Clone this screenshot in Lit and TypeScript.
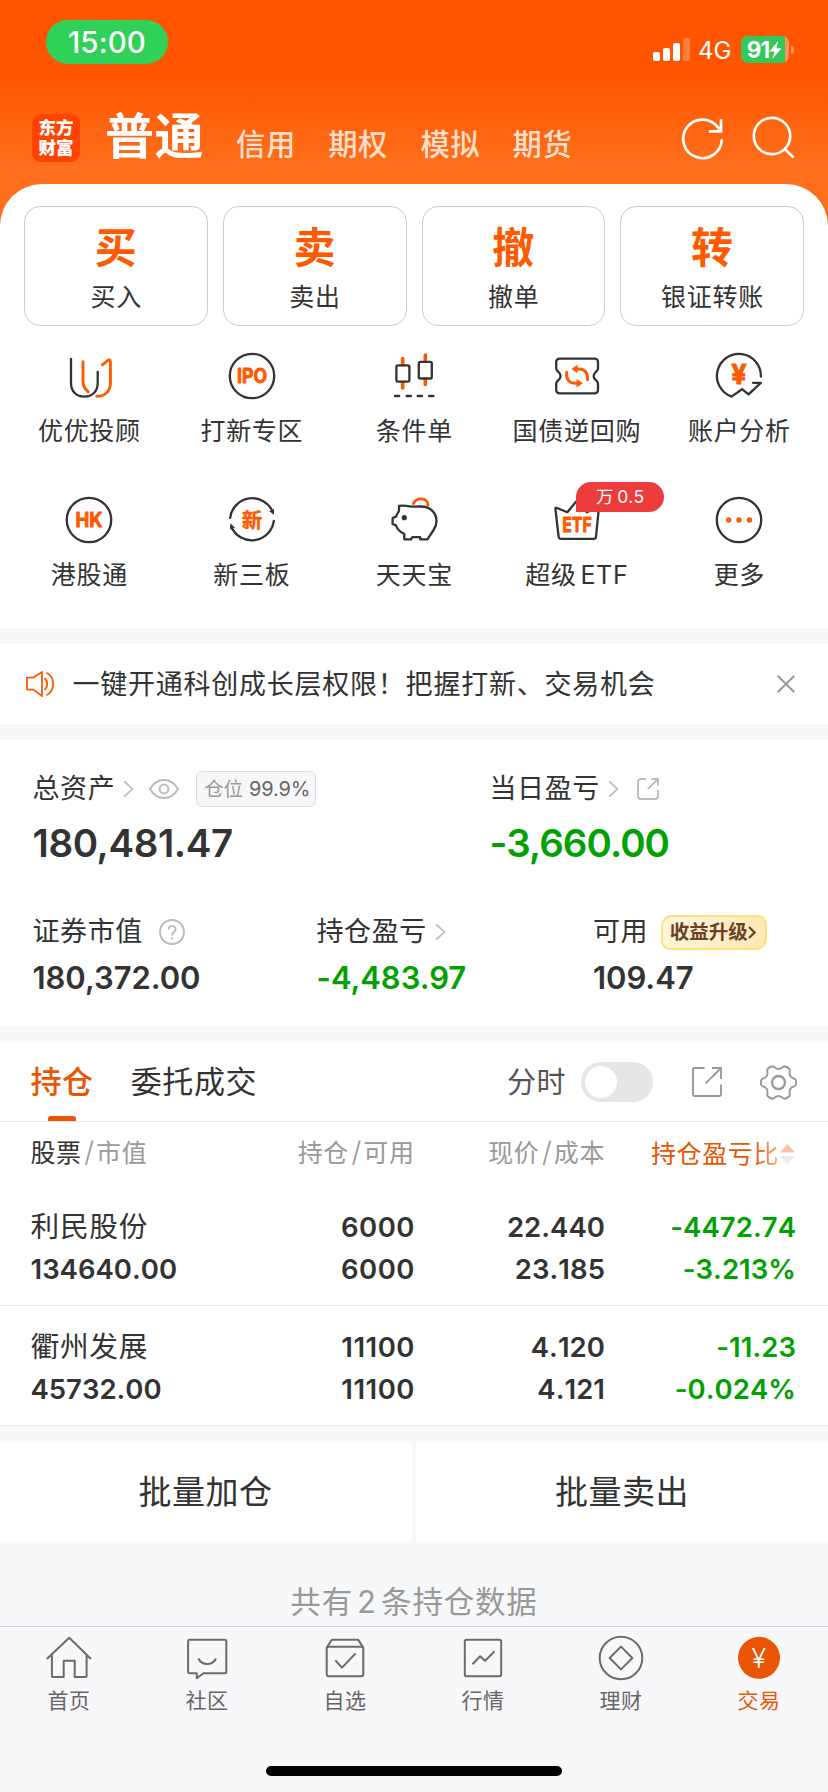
import { LitElement, html, svg, css, nothing } from "lit";
import { customElement } from "lit/decorators.js";
import { classMap } from "lit/directives/class-map.js";

const gearPath = (() => {
  const pt = (deg: number, r: number) => {
    const a = (deg * Math.PI) / 180;
    return `${(18.5 + r * Math.cos(a)).toFixed(2)} ${(18.5 + r * Math.sin(a)).toFixed(2)}`;
  };
  let d = `M${pt(-9, 17.4)}`;
  for (let k = 0; k < 6; k++) {
    const t = k * 60;
    d += ` Q${pt(t, 18)} ${pt(t + 9, 17.4)} Q${pt(t + 13, 16.8)} ${pt(t + 16, 15.4)} Q${pt(t + 30, 12)} ${pt(t + 44, 15.4)} Q${pt(t + 47, 16.8)} ${pt(t + 51, 17.4)}`;
  }
  return d + "Z";
})();

const icons: Record<string, unknown> = {
  uu: svg`<path class="d" d="M6 7V31.2C6 39.5 11.5 44.6 19.3 44.6S32.7 39.5 32.7 31.2V19.8"/>
    <path class="o" d="M18 9.7V29.5C18 34 20 37 23.2 39.8"/>
    <path class="o" d="M37.4 12.9 42.6 8.5Q45.4 7 45.4 10V31C45.4 39 40 44.4 31.8 44.4"/>`,
  ipo: svg`<circle class="d" cx="24" cy="24" r="22.2"/>
    <text class="t" x="24" y="31.2" font-size="20" textLength="30" lengthAdjust="spacingAndGlyphs">IPO</text>`,
  cond: svg`<path class="o w" d="M12.7 6.5V13M12.7 31V36M35.3 3V9M35.3 27V32.5"/>
    <rect class="d" x="6.4" y="13.3" width="13" height="16.4" rx="1.6"/>
    <rect class="d" x="28.8" y="9.9" width="13" height="16.6" rx="1.6"/>
    <path class="d" d="M5 44H9.2M16.6 44H21M27.6 44H32M39 44H43.4"/>`,
  bond: svg`<path class="d" d="M6.4 6.7H41.8A3.2 3.2 0 0 1 45 9.9V16.6C45 19.6 40.6 19.8 40.6 24S45 28.4 45 31.4V38.1A3.2 3.2 0 0 1 41.8 41.3H6.4A3.2 3.2 0 0 1 3.2 38.1V31.4C3.2 28.4 7.6 28.2 7.6 24S3.2 19.6 3.2 16.6V9.9A3.2 3.2 0 0 1 6.4 6.7Z"/>
    <path class="o" d="M23 17H26.5C32 17 35.2 21.5 34.5 27.8M13.7 20.2C12.8 27 16 31.2 21.5 31.2H25.5"/>
    <path class="of" d="M18.3 17 24.6 12.8V21.2ZM29.8 31.2 23.5 27V35.4Z"/>`,
  acct: svg`<path class="d" d="M45.9 24.6A22 22 0 1 0 16.5 44.6L27 37.2 33.6 42.4 45.8 30.8H38"/>
    <text class="t" x="24" y="32" font-size="27">¥</text>`,
  hk: svg`<circle class="d" cx="24" cy="24" r="22.2"/>
    <text class="t" x="24" y="31.2" font-size="20" textLength="27" lengthAdjust="spacingAndGlyphs">HK</text>`,
  xin: svg`<path class="d" d="M2.2 21.8A22.2 22.2 0 0 1 44.8 16M45.8 24.8A22.2 22.2 0 0 1 3.2 30.5"/>
    <path class="df" d="M41.2 15.2 45.9 13 46.1 18.8Z"/><path class="df" d="M6.9 31.8 2.1 33.4 2.3 27.2Z"/>
    <text class="t cjk" x="24" y="31.6" font-size="20.5">新</text>`,
  pig: svg`<path class="d" d="M24 10.7C20 11 18 9 9 9.8V14.6C8.5 16.5 6.6 18.5 6 20.6L2.6 22V28L5.9 29.4C7.5 33.5 10.5 36.4 14.3 38V43.3H21L22.4 41.2H30.2V43.3H37.4L43.6 34C46.8 29 47.4 23 44.6 17.6 41.5 12.6 36 10.3 30 10.5Z"/>
    <circle class="df" cx="14.3" cy="21.7" r="2.6"/>
    <path class="o" d="M23.4 7.6C26 1.4 37.8 0.6 38 9.4"/>`,
  etf: svg`<path class="d" d="M2.4 12.6Q2.4 11.2 4 12L14.3 16.2 23.2 5.6Q24 4.8 24.8 5.6L33.7 16.2 44 12Q46 11.2 45.8 12.8L43 40.6Q42.8 42.9 40.4 42.9H8.2Q6 42.9 5.6 40.6Z"/>
    <text class="t" x="24" y="35.6" font-size="20" textLength="29.5" lengthAdjust="spacingAndGlyphs">ETF</text>`,
  more: svg`<circle class="d" cx="24" cy="24" r="22.2"/>
    <circle class="of" cx="13.6" cy="24" r="2.7"/><circle class="of" cx="24" cy="24" r="2.7"/><circle class="of" cx="34.4" cy="24" r="2.7"/>`,
  home: svg`<path class="g" d="M1.8 25 24.2 3.8 46 25M6.9 20.6V41.4Q6.9 43.1 8.6 43.1H18.7V26.8H29.7V43.1H40Q41.6 43.1 41.6 41.4V20.6"/>`,
  chat: svg`<path class="g" d="M6.6 5.7H41.8Q43.3 5.7 43.3 7.2V37.8Q43.3 39.3 41.8 39.3H20.4L13.8 44.2V39.3H6.6Q5.1 39.3 5.1 37.8V7.2Q5.1 5.7 6.6 5.7Z"/><path class="g" d="M15.4 24.5C19 31.8 29.2 31.8 33 24.5"/>`,
  pick: svg`<rect class="g" x="5.7" y="12.8" width="36.6" height="29.4" rx="2"/><path class="g" d="M5.9 13.4 10.2 6.6Q10.7 5.8 11.6 5.8H36.4Q37.3 5.8 37.8 6.6L42.1 13.4M14.4 26.4 21 33.6 34.6 19.4"/>`,
  quote: svg`<rect class="g" x="5.8" y="5.8" width="36.4" height="36.4" rx="1.8"/><path class="g" d="M13.4 30.3 21.2 22.2 26 26.8 35.6 17.4"/>`,
  wealth: svg`<circle class="g" cx="24" cy="24" r="21.3"/><path class="g" d="M24 12.6 35.4 24 24 35.4 12.6 24Z"/>`,
  trade: svg`<circle class="tf" cx="24" cy="23.8" r="21"/><text class="yen" x="24" y="33.6" font-size="27">¥</text>`,
};

@customElement("app-root")
export class AppRoot extends LitElement {
  static styles = css`
    :host {
      display: flex; flex-direction: column; width: 828px; height: 1792px; overflow: hidden;
      background: #f7f8fa; color: #333; font-family: Inter, "Noto Sans CJK SC", sans-serif;
      -webkit-font-smoothing: antialiased;
    }
    * { box-sizing: border-box; }
    svg { display: block; flex: none; overflow: visible; }
    .head { height: 246px; flex: none; background: linear-gradient(#ff5500 75px, #ff6f1b 165px); display: flex; flex-direction: column; }
    .status { height: 84px; padding: 20px 34px 0 46px; display: flex; align-items: flex-start; color: #fff; }
    .time { width: 122px; height: 44px; border-radius: 22px; background: #30d158; font-size: 29.5px; line-height: 45px; text-align: center; font-weight: 500; letter-spacing: 0.1px; }
    .sig { margin: 18px 0 0 485px; }
    .net { font-size: 24px; line-height: 24px; margin: 19px 0 0 8px; width: 43px; }
    .batt { display: flex; align-items: center; justify-content: center; width: 48px; height: 27px; margin-top: 16px; border-radius: 7px; background: linear-gradient(90deg, #34c759 44px, #ff925c 44px); font-size: 22.5px; font-weight: 700; padding-right: 4px; letter-spacing: -0.8px; padding-left: 3px; }
    .nub { width: 3px; height: 8px; margin: 26px 0 0 2px; border-radius: 0 4px 4px 0; background: #ff925c; }
    .nav { height: 100px; padding: 0 31px 0 32px; display: flex; align-items: flex-start; color: #fff; }
    .logo { width: 48px; height: 48px; margin-top: 30px; border-radius: 9px; background: #ff4400; font-size: 17.5px; line-height: 20px; font-weight: 900; padding-top: 4px; text-align: center; }
    .mode { font-size: 49px; line-height: 56px; font-weight: 700; margin: 25px 0 0 25px; width: 131px; white-space: nowrap; letter-spacing: 0.5px; }
    .alt { font-size: 29.3px; line-height: 34px; margin-top: 44.4px; width: 92.2px; letter-spacing: 0.6px; font-weight: 500; color: rgba(255,255,255,.8); }
    .ring { margin: 34px 0 0 77.7px; }
    .find { margin: 33px 0 0 28px; }
    .panel { height: 444px; margin-top: -62px; flex: none; background: #fff; border-radius: 42px 42px 0 0; padding-top: 22px; }
    .cards { display: grid; grid-template-columns: repeat(4, 1fr); gap: 15px; padding: 0 24px; }
    .card { height: 120px; border: 1px solid #ccc; border-radius: 16px; display: flex; flex-direction: column; align-items: center; }
    .big { font-size: 42px; line-height: 46px; font-weight: 700; color: #ff5a00; margin-top: 18px; }
    .lab { font-size: 25px; line-height: 30px; letter-spacing: 0.7px; margin-right: -0.7px; white-space: nowrap; word-spacing: -4px; }
    .card .lab { margin-top: 11px; }
    .grid { display: grid; grid-template-columns: repeat(5, 162.5px); grid-auto-rows: 144px; padding: 26px 7.75px 0; }
    .cell { display: flex; flex-direction: column; align-items: center; position: relative; }
    .cell .lab { margin-top: 16px; }
    .tip { position: absolute; left: 81px; top: -14px; width: 88px; height: 30px; border-radius: 15px 15px 15px 0; background: #ed3c3c; color: #fff; font-size: 17.5px; line-height: 30px; text-align: center; letter-spacing: 0.4px; word-spacing: -2px; }
    .d { fill: none; stroke: #333; stroke-width: 2.3; stroke-linecap: round; stroke-linejoin: round; }
    .df { fill: #333; }
    .o { fill: none; stroke: #ff5a00; stroke-width: 2.9; stroke-linecap: round; stroke-linejoin: round; }
    .o.w { stroke-width: 3.6; }
    .of { fill: #ff5a00; }
    .t { fill: #ff5a00; stroke: #ff5a00; stroke-width: 0.9; stroke-linejoin: round; font-family: Inter, sans-serif; font-weight: 700; text-anchor: middle; }
    .t.cjk { font-family: "Noto Sans CJK SC", sans-serif; font-weight: 700; stroke-width: 0.4; }
    .g { fill: none; stroke: #6b6b6b; stroke-width: 2; stroke-linejoin: round; }
    .tf { fill: #ea5504; }
    .yen { fill: #fff; text-anchor: middle; font-family: Inter, sans-serif; font-weight: 300; }
    .notice { height: 80px; margin-top: 16px; flex: none; background: #fff; display: flex; align-items: center; padding: 0 33px 0 26px; }
    .notice .msg { font-size: 27px; letter-spacing: 0.76px; line-height: 34px; padding-top: 2px; margin-left: 17.5px; flex: 1; white-space: nowrap; }
    .assets { height: 286px; margin-top: 16px; flex: none; background: #fff; padding: 31px 0 0 32.5px; }
    .r1 { display: grid; grid-template-columns: 457px 1fr; }
    .r2 { display: grid; grid-template-columns: 284px 276.5px 1fr; margin-top: 49px; }
    .cap { display: flex; align-items: center; height: 36px; line-height: 34px; font-size: 27px; letter-spacing: 0.6px; white-space: nowrap; }
    .chev { margin-left: 8px; }
    .eye { margin-left: 15px; }
    .out { margin-left: 18px; }
    .rate { margin-left: 17px; width: 120px; height: 36px; border: 1px solid #dedfe3; border-radius: 6px; background: #f7f7fa; display: flex; align-items: center; padding-left: 7px; font-size: 19.5px; color: #999; letter-spacing: -0.2px; }
    .rate .n { color: #666; margin-left: 6px; font-size: 20px; letter-spacing: -0.1px; }
    .sum { font-size: 38.5px; line-height: 44px; font-weight: 600; margin-top: 14px; letter-spacing: -0.4px; }
    .sum.down { letter-spacing: -0.95px; }
    .val { font-size: 31px; line-height: 36px; font-weight: 600; margin-top: 9.5px; letter-spacing: -0.05px; }
    .down { color: #00a100; }
    .help { margin-left: 16px; }
    .up { margin-left: 12.5px; width: 106px; height: 35px; border: 2px solid #ffe27d; border-radius: 11px 9px 11px 9px; background: linear-gradient(100deg, #fff6dc, #ffe8b5); color: #6b4226; font-weight: 700; font-size: 19.5px; letter-spacing: 0; display: flex; align-items: center; padding-left: 7px; }
    .tabs { height: 80px; margin-top: 16px; flex: none; background: #fff; border-bottom: 1px solid #e9eaec; display: flex; padding: 0 31px 0 30.5px; }
    .tab { display: flex; flex-direction: column; align-items: center; font-size: 31px; line-height: 40px; padding-top: 20px; letter-spacing: 0.6px; white-space: nowrap; }
    .tab.on { color: #ea5504; font-weight: 500; margin-right: 37px; }
    .tab.on::after { content: ""; width: 28px; height: 5px; margin-top: 14px; border-radius: 3px 3px 0 0; background: #ea5504; }
    .time2 { font-size: 29px; line-height: 40px; margin: 21px 0 0 auto; color: #555; letter-spacing: 0.5px; }
    .switch { width: 72px; height: 40px; margin: 20px 0 0 15px; border-radius: 20px; background: #e5e6e8; padding: 4px; }
    .knob { width: 32px; height: 32px; border-radius: 50%; background: #fff; }
    .exp { margin: 25px 0 0 39px; }
    .gear { margin: 21.5px 0 0 38px; }
    .row { display: grid; grid-template-columns: 200px 184px 190.5px 191px; padding-left: 30.5px; background: #fff; flex: none; justify-items: end; white-space: nowrap; }
    .row > :first-child { justify-self: start; }
    .th { height: 64px; line-height: 63px; font-size: 25px; color: #999; letter-spacing: 0.6px; }
    .th i { font-style: normal; margin: 0 1.5px 0 2.5px; font-size: 28px; line-height: 1; font-weight: 300; }
    .th b { font-weight: 400; color: #333; }
    .sort { display: flex; align-items: center; color: #ea5504; }
    .sort .fade { background: linear-gradient(90deg, #ea5504, #f7b28c); -webkit-background-clip: text; color: transparent; }
    .stock { height: 120px; border-bottom: 1px solid #e9eaec; padding-top: 19.5px; font-size: 27.5px; font-weight: 600; letter-spacing: 0; line-height: 42.7px; font-kerning: none; }
    .stock .name { font-size: 28.7px; font-weight: 400; letter-spacing: 0.7px; }
    .stock .r { text-align: right; letter-spacing: 0.05px; }
    .stock .q { letter-spacing: 0.5px; margin-right: -0.5px; }
    .bulk { display: grid; grid-template-columns: 1fr 1fr; gap: 4px; margin-top: 16px; flex: none; }
    .bulk div { height: 100px; line-height: 101px; background: #fff; text-align: center; font-size: 33px; letter-spacing: 0.5px; }
    .bulk div:first-child { padding-right: 1px; }
    .count { height: 84px; flex: none; padding-top: 39px; line-height: 42px; text-align: center; font-size: 30.5px; letter-spacing: 0.8px; word-spacing: -5px; color: #999; }
    .bar { flex: 1; background: #f8f8fa; border-top: 1px solid #cfd4dc; display: flex; flex-direction: column; align-items: center; }
    .items { display: grid; grid-template-columns: repeat(6, 138px); height: 139px; padding-top: 7px; }
    .item { display: flex; flex-direction: column; align-items: center; font-size: 21px; line-height: 28px; color: #666; letter-spacing: 0.6px; gap: 5px; }
    .item.on { color: #ea5504; }
    .homebar { width: 296px; height: 10px; border-radius: 5px; background: #000; }
  `;

  private chev() {
    return html`<svg class="chev" width="11" height="18" viewBox="0 0 11 18"><path d="M1.2 1.4 9.4 9 1.2 16.6" fill="none" stroke="#bbb" stroke-width="1.7"/></svg>`;
  }
  private glyph(name: string) {
    return html`<svg width="48" height="48" viewBox="0 0 48 48">${icons[name]}</svg>`;
  }
  private cards = [["买", "买入"], ["卖", "卖出"], ["撤", "撤单"], ["转", "银证转账"]];
  private tools = [
    ["uu", "优优投顾"], ["ipo", "打新专区"], ["cond", "条件单"], ["bond", "国债逆回购"], ["acct", "账户分析"],
    ["hk", "港股通"], ["xin", "新三板"], ["pig", "天天宝"], ["etf", "超级 ETF", "万 0.5"], ["more", "更多"],
  ];
  private stocks = [
    ["利民股份", "134640.00", "6000", "6000", "22.440", "23.185", "-4472.74", "-3.213%"],
    ["衢州发展", "45732.00", "11100", "11100", "4.120", "4.121", "-11.23", "-0.024%"],
  ];
  private nav = [["home", "首页"], ["chat", "社区"], ["pick", "自选"], ["quote", "行情"], ["wealth", "理财"], ["trade", "交易"]];

  render() {
    return html`
      <header class="head">
        <div class="status">
          <div class="time">15:00</div>
          <svg class="sig" width="37" height="23" viewBox="0 0 37 23" fill="#fff"><rect y="14" width="7" height="9" rx="2"/><rect x="10" y="10" width="7" height="13" rx="2"/><rect x="20" y="5" width="7" height="18" rx="2"/><rect x="30" width="7" height="23" rx="2" opacity=".25"/></svg>
          <div class="net">4G</div>
          <div class="batt">91<svg width="13" height="18" viewBox="0 0 13 18"><path d="M9.2 0 0.3 10.4H5.4L3.4 18 12.6 7.2H7.4Z" fill="#fff"/></svg></div>
          <div class="nub"></div>
        </div>
        <div class="nav">
          <div class="logo">东方<br />财富</div>
          <div class="mode">普通</div>
          ${["信用", "期权", "模拟", "期货"].map((m) => html`<div class="alt">${m}</div>`)}
          <svg class="ring" width="42" height="42" viewBox="0 0 42 42" fill="none" stroke="#fff" stroke-width="2.7"><path d="M39.8 21.2A19.3 19.3 0 1 1 36.2 9.6L38.4 13.3M39 1.2V13.4H26.8"/></svg>
          <svg class="find" width="43" height="43" viewBox="0 0 43 43" fill="none" stroke="#fff" stroke-width="2.7"><circle cx="20" cy="19" r="18.2"/><path d="M32.8 32 41.6 40.6"/></svg>
        </div>
      </header>
      <section class="panel">
        <div class="cards">${this.cards.map(([c, l]) => html`<div class="card"><div class="big">${c}</div><div class="lab">${l}</div></div>`)}</div>
        <div class="grid">${this.tools.map(([i, l, tip]) => html`<div class="cell">${this.glyph(i)}<div class="lab">${l}</div>${tip ? html`<div class="tip">${tip}</div>` : nothing}</div>`)}</div>
      </section>
      <section class="notice">
        <svg width="29" height="26" viewBox="0 0 29 26" fill="none" stroke="#ff5a00" stroke-width="1.8" stroke-linejoin="round"><path d="M1 6.6H7.4L16 1V25L7.4 18.6H1ZM18.6 7.2C22 10 22 16 18.6 18.8M20.4 1.8C29.4 6 29.4 20 20.4 24.2"/></svg>
        <div class="msg">一键开通科创成长层权限！把握打新、交易机会</div>
        <svg width="18" height="18" viewBox="0 0 18 18"><path d="M.7.7 17.3 17.3M17.3.7.7 17.3" stroke="#999" stroke-width="2"/></svg>
      </section>
      <section class="assets">
        <div class="r1">
          <div>
            <div class="cap">总资产${this.chev()}
              <svg class="eye" width="30" height="20" viewBox="0 0 30 20" fill="none" stroke="#bbb" stroke-width="2"><path d="M1 10C8-2 22-2 29 10 22 22 8 22 1 10Z"/><circle cx="15" cy="10" r="4.4"/></svg>
              <div class="rate">仓位<span class="n">99.9%</span></div></div>
            <div class="sum">180,481.47</div>
          </div>
          <div>
            <div class="cap">当日盈亏${this.chev()}
              <svg class="out" width="22" height="22" viewBox="0 0 22 22" fill="none" stroke="#bbb" stroke-width="1.9"><path d="M9 1H4Q1 1 1 4V18Q1 21 4 21H18Q21 21 21 18V12M14.4 1H21V7.6M21 1 10.8 11.2"/></svg></div>
            <div class="sum down">-3,660.00</div>
          </div>
        </div>
        <div class="r2">
          <div>
            <div class="cap">证券市值
              <svg class="help" width="26" height="26" viewBox="0 0 26 26" fill="none" stroke="#bbb" stroke-width="1.9"><circle cx="13" cy="13" r="12"/><path d="M9.6 10.4C9.6 5.8 16.6 5.8 16.6 10.2 16.6 13 13 13 13 16.4M13 18.2V20.2"/></svg></div>
            <div class="val">180,372.00</div>
          </div>
          <div><div class="cap">持仓盈亏${this.chev()}</div><div class="val down">-4,483.97</div></div>
          <div>
            <div class="cap">可用<div class="up">收益升级<svg width="8" height="13" viewBox="0 0 8 13"><path d="M1 1 6.6 6.5 1 12" fill="none" stroke="#6b4226" stroke-width="2.4"/></svg></div></div>
            <div class="val">109.47</div>
          </div>
        </div>
      </section>
      <section class="tabs">
        <div class="tab on">持仓</div><div class="tab">委托成交</div>
        <div class="time2">分时</div>
        <div class="switch"><div class="knob"></div></div>
        <svg class="exp" width="30" height="30" viewBox="0 0 30 30" fill="none" stroke="#999" stroke-width="1.9"><path d="M12.6 1H2.4Q1 1 1 2.4V27.6Q1 29 2.4 29H27.6Q29 29 29 27.6V17.6M20 1H29V12M29 1 13.4 16.6"/></svg>
        <svg class="gear" width="37" height="37" viewBox="0 0 37 37" fill="none" stroke="#999"><path d=${gearPath} stroke-width="1.9" stroke-linejoin="round"/><circle cx="18.5" cy="18.5" r="6.5" stroke-width="2.4"/></svg>
      </section>
      <div class="row th">
        <div><b>股票</b><i>/</i>市值</div><div>持仓<i>/</i>可用</div><div>现价<i>/</i>成本</div>
        <div class="sort">持仓盈亏<span class="fade">比</span><svg width="17" height="22" viewBox="0 0 17 22"><path d="M8.5 1 16 9.6H1Z" fill="#f9c4a6"/><path d="M8.5 21 1 13H16Z" fill="#ececee"/></svg></div>
      </div>
      ${this.stocks.map((s) => html`<div class="row stock">
        <div><div class="name">${s[0]}</div><div>${s[1]}</div></div>
        <div class="r q">${s[2]}<br />${s[3]}</div>
        <div class="r">${s[4]}<br />${s[5]}</div>
        <div class="r down">${s[6]}<br />${s[7]}</div>
      </div>`)}
      <div class="bulk"><div>批量加仓</div><div>批量卖出</div></div>
      <div class="count">共有 2 条持仓数据</div>
      <footer class="bar">
        <div class="items">${this.nav.map(([i, l]) => html`<div class=${classMap({ item: true, on: i === "trade" })}>${this.glyph(i)}<span>${l}</span></div>`)}</div>
        <div class="homebar"></div>
      </footer>`;
  }
}
